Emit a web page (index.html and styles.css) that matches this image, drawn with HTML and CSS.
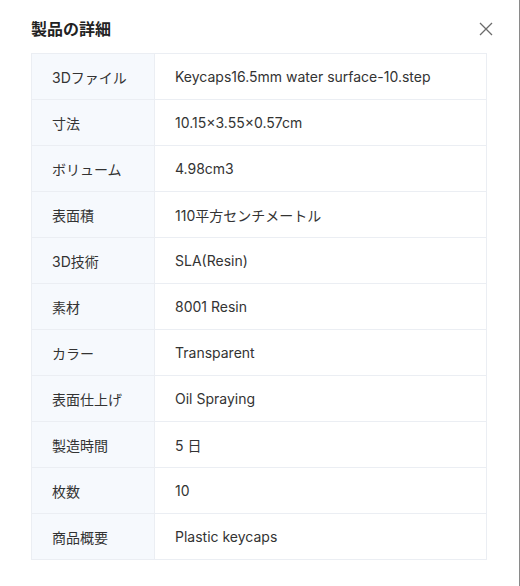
FILE: index.html
```html
<!DOCTYPE html>
<html lang="ja">
<head>
<meta charset="utf-8">
<title>製品の詳細</title>
<link rel="stylesheet" href="styles.css">
</head>
<body>
<div class="modal">
  <div class="header">
    <h2 class="title">製品の詳細</h2>
    <button class="close" aria-label="close">
      <svg width="14" height="14" viewBox="0 0 14 14"><path d="M1 1 L13 13 M13 1 L1 13" stroke="#6b6b6b" stroke-width="1.3" fill="none"/></svg>
    </button>
  </div>
  <div class="table">
    <div class="row"><div class="label">3Dファイル</div><div class="value">Keycaps16.5mm water surface-10.step</div></div>
    <div class="row"><div class="label">寸法</div><div class="value">10.15×3.55×0.57cm</div></div>
    <div class="row"><div class="label">ボリューム</div><div class="value">4.98cm3</div></div>
    <div class="row"><div class="label">表面積</div><div class="value">110平方センチメートル</div></div>
    <div class="row"><div class="label">3D技術</div><div class="value">SLA(Resin)</div></div>
    <div class="row"><div class="label">素材</div><div class="value">8001 Resin</div></div>
    <div class="row"><div class="label">カラー</div><div class="value">Transparent</div></div>
    <div class="row"><div class="label">表面仕上げ</div><div class="value">Oil Spraying</div></div>
    <div class="row"><div class="label">製造時間</div><div class="value">5 日</div></div>
    <div class="row"><div class="label">枚数</div><div class="value">10</div></div>
    <div class="row"><div class="label">商品概要</div><div class="value">Plastic keycaps</div></div>
  </div>
</div>
<div class="edge"></div>
</body>
</html>
```
FILE: styles.css
```css
html, body {
  margin: 0;
  padding: 0;
  background: #fff;
}
body {
  font-family: Inter, "Noto Sans CJK JP", sans-serif;
  color: #333;
  width: 520px;
  height: 586px;
  box-sizing: border-box;
  border-right: 1px solid #8a8a8a;
  position: relative;
  overflow: hidden;
}
.modal {
  padding: 19px 0 0 31px;
  width: 456px;
}
.header {
  display: flex;
  align-items: center;
  justify-content: space-between;
  height: 20px;
}
.title {
  margin: 0;
  font-size: 16px;
  font-weight: 700;
  line-height: 20px;
  color: #222;
}
.close {
  border: 0;
  background: none;
  padding: 0;
  margin-right: -6px;
  width: 14px;
  height: 14px;
  display: flex;
}
.table {
  margin-top: 14px;
  border: 1px solid #ebeef3;
}
.row {
  display: grid;
  grid-template-columns: 123px 1fr;
  height: 45px;
  border-bottom: 1px solid #ebeef3;
}
.row:last-child {
  border-bottom: 0;
}
.label {
  background: #f6f9fd;
  border-right: 1px solid #ebeef3;
  padding-left: 20px;
  display: flex;
  align-items: center;
  font-size: 14px;
  color: #333;
}
.value {
  padding-left: 20px;
  display: flex;
  align-items: center;
  font-size: 14px;
  color: #333;
}
.edge {
  position: absolute;
  right: -1px;
  bottom: 0;
  width: 1px;
  height: 97px;
  background: #1f3a5c;
}
```
